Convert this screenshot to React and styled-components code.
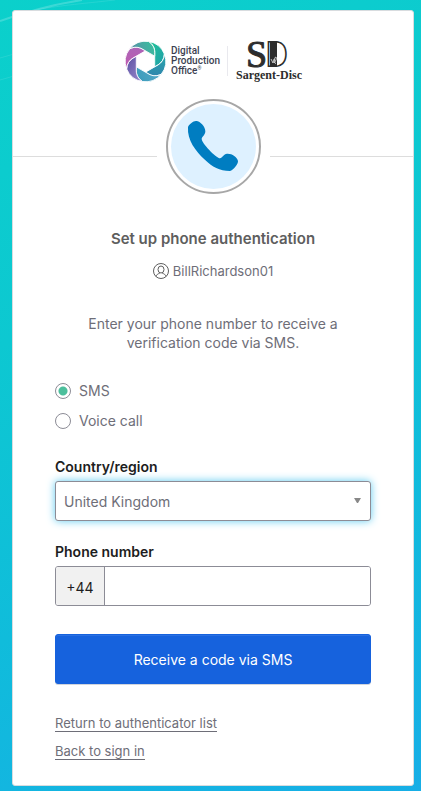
import React, { useState } from "react"
import styled, { createGlobalStyle } from "styled-components"

const GlobalStyle = createGlobalStyle`
  * {
    box-sizing: border-box;
  }

  body {
    margin: 0;
    font-family: Inter, "Liberation Sans", sans-serif;
    font-size: 14px;
    color: #6e6e78;
  }
`

const Page = styled.div`
  position: relative;
  min-height: 100vh;
  padding: 10px 7px 5px 12px;
  background: linear-gradient(155deg, #0bd0cb 0%, #0dc8d1 35%, #10bcdb 65%, #17aee6 100%);
`

const Streaks = styled.svg`
  position: absolute;
  top: 0;
  left: 0;
`

const Card = styled.main`
  position: relative;
  min-height: calc(100vh - 15px);
  background: #fff;
  border: 1px solid #d8dcdf;
  border-radius: 3px;
`

const Logos = styled.header`
  display: flex;
  justify-content: center;
  align-items: center;
  height: 80px;
  padding-top: 20px;
`

const ProductName = styled.div`
  margin: 0 7px 0 5px;
  font-family: Roboto, sans-serif;
  font-size: 10px;
  font-weight: 500;
  line-height: 10px;
  color: #3c3f51;

  sup {
    font-size: 5px;
    line-height: 0;
  }
`

const LogoDivider = styled.span`
  width: 1px;
  height: 30px;
  margin-right: 8px;
  background: #e9e9ee;
`

const Sargent = styled.svg`
  overflow: visible;
`

const BeaconRow = styled.div`
  display: flex;
  align-items: center;
  margin-top: 8px;
`

const Rule = styled.hr`
  flex: 1;
  height: 1px;
  margin: 20px 0 0;
  border: 0;
  background: #ddd;
`

const Beacon = styled.div`
  width: 95px;
  height: 95px;
  margin: 0 9px;
  padding: 3px;
  border: 2px solid #a7a7a7;
  border-radius: 50%;

  svg {
    display: block;
    border-radius: 50%;
    background: #def1ff;
  }
`

const Content = styled.form`
  display: flex;
  flex-direction: column;
  padding: 35px 42px 12px;
`

const Title = styled.h1`
  margin: 0;
  font-size: 15px;
  font-weight: 600;
  line-height: 20px;
  text-align: center;
  color: #5e5e5e;
`

const Identifier = styled.div`
  display: flex;
  justify-content: center;
  align-items: center;
  gap: 4px;
  margin-top: 12px;
  font-size: 13px;
  line-height: 20px;
`

const Explanation = styled.p`
  margin: 33px 0 0;
  padding: 0 30px;
  line-height: 19px;
  text-align: center;
`

const Options = styled.div`
  display: grid;
  gap: 10px;
  margin-top: 29px;
`

const Option = styled.label`
  display: flex;
  align-items: center;
  gap: 8px;
  line-height: 20px;
`

const Radio = styled.input`
  appearance: none;
  width: 16px;
  height: 16px;
  margin: 0;
  border: 1px solid #8c8c96;
  border-radius: 50%;

  &:checked {
    background: radial-gradient(circle, #4cbf9c 4px, #fff 5px);
  }
`

const Label = styled.label`
  margin-top: ${props => props.$top};
  margin-bottom: 4px;
  font-weight: 600;
  line-height: 20px;
  color: #1d1d21;
`

const SelectBox = styled.div`
  position: relative;

  svg {
    position: absolute;
    top: 17px;
    right: 10px;
    pointer-events: none;
  }
`

const Select = styled.select`
  appearance: none;
  display: block;
  width: 100%;
  height: 40px;
  padding: 0 28px 0 8px;
  border: 1px solid #8c8c96;
  border-radius: 3px;
  outline: none;
  background: #fff;
  box-shadow: 0 0 8px #5ecbf0;
  font: inherit;
  color: inherit;
`

const PhoneBox = styled.div`
  display: flex;
  height: 40px;
  overflow: hidden;
  border: 1px solid #8c8c96;
  border-radius: 3px;
`

const DialCode = styled.span`
  display: flex;
  align-items: center;
  justify-content: center;
  width: 49px;
  padding-top: 2px;
  border-right: 1px solid #8c8c96;
  background: #f1f1f1;
  color: #1d1d21;
`

const PhoneInput = styled.input`
  flex: 1;
  min-width: 0;
  padding: 0 10px;
  border: 0;
  outline: none;
  font: inherit;
  color: #1d1d21;
`

const SubmitButton = styled.button`
  height: 50px;
  margin: 28px 0 32px;
  padding: 0;
  border: 1px solid #1662dd;
  border-radius: 3px;
  background: #1662dd;
  box-shadow: 0 1px 0 #d0d4dc, inset 0 1px 0 #2a70e2;
  font: inherit;
  color: #fff;
`

const FooterLink = styled.a`
  align-self: flex-start;
  margin-bottom: 12px;
  border-bottom: 1px solid #6e6e78;
  font-size: 13px;
  line-height: 15px;
  text-decoration: none;
  color: inherit;
`

const blades = [
  ["#1fc596", "#209daa"],
  ["#27a8ab", "#327fae"],
  ["#59a9c8", "#369ab9"],
  ["#9b8acd", "#5b51a3"],
  ["#c15bb1", "#a667b8"],
  ["#5e8da8", "#31c79c"],
]

const ApertureLogo = () => (
  <svg width="41" height="41" viewBox="-20 -20 40 40" aria-hidden="true">
    <defs>
      {blades.map(([from, to], i) => (
        <linearGradient key={i} id={`blade${i}`} x1="0" y1="0" x2="1" y2="1">
          <stop offset="0" stopColor={from} />
          <stop offset="1" stopColor={to} />
        </linearGradient>
      ))}
    </defs>
    {blades.map((_, i) => (
      <path
        key={i}
        d="M3-19.5C7-17 9-13 9-9V5.2L12.3 3.3C15.8 1.3 18.2-2.4 18.4-7.2A19.8 19.8 0 0 0 3-19.5Z"
        fill={`url(#blade${i})`}
        stroke="#fff"
        strokeWidth="0.8"
        transform={`rotate(${i * 60})`}
      />
    ))}
  </svg>
)

const SargentLogo = () => (
  <Sargent width="65" height="44" viewBox="0 0 65 44" role="img" aria-label="Sargent-Disc">
    <g fill="#2d2d2d" fontFamily="Liberation Serif, serif">
      <text x="10" y="28" fontSize="38" stroke="#2d2d2d" strokeWidth="1">S</text>
      <text x="28" y="28" fontSize="35" fontFamily="Inter, sans-serif" fontWeight="200">D</text>
      <rect x="34" y="3" width="7" height="25" />
      <text x="0" y="40" fontSize="12" fontWeight="700">Sargent-Disc</text>
    </g>
    <path
      d="M35 20l2 4 1-4M38 24c2-2 3-5 2-6-2 0-2 6 0 7"
      fill="none"
      stroke="#fff"
      strokeWidth="0.7"
    />
  </Sargent>
)

const PhoneIcon = () => (
  <svg width="85" height="85" viewBox="60 42 255 255" aria-hidden="true">
    <path
      fill="#007dc1"
      d="M136 93C130 91 112 103 111 112C108 150 135 185 160 208C185 232 205 243 237 243C247 240 262 222 261 213C258 200 243 190 228 191C218 192 214 203 207 205C195 203 152 160 152 146C154 139 163 135 163 124C163 110 148 94 136 93Z"
    />
  </svg>
)

const UserIcon = () => (
  <svg width="16" height="16" viewBox="0 0 16 16" fill="none" stroke="#5e5e5e" aria-hidden="true">
    <circle cx="8" cy="8" r="7.500" />
    <ellipse cx="8" cy="6.500" rx="3" ry="3.500" />
    <path d="M3 13.500C3.500 11.500 5 10.800 6.500 10.300V9.500M13 13.500C12.500 11.500 11 10.800 9.500 10.300V9.500" />
  </svg>
)

const App = () => {
  const [method, setMethod] = useState("sms")

  return (
    <Page>
      <GlobalStyle />
      <Streaks width="120" height="100" fill="none" stroke="#fff" strokeOpacity="0.2" aria-hidden="true">
        <path d="M0 21C25 12 50 5 82 0" strokeWidth="2" />
        <path d="M30 11C60 5 90 3 115 0M0 58L14 54M0 80L14 76" strokeOpacity="0.1" />
      </Streaks>
      <Card>
        <Logos>
          <ApertureLogo />
          <ProductName>
            Digital
            <br />
            Production
            <br />
            Office<sup>®</sup>
          </ProductName>
          <LogoDivider />
          <SargentLogo />
        </Logos>
        <BeaconRow>
          <Rule />
          <Beacon>
            <PhoneIcon />
          </Beacon>
          <Rule />
        </BeaconRow>
        <Content onSubmit={e => e.preventDefault()}>
          <Title>Set up phone authentication</Title>
          <Identifier>
            <UserIcon />
            <span>BillRichardson01</span>
          </Identifier>
          <Explanation>
            Enter your phone number to receive a verification code via SMS.
          </Explanation>
          <Options role="radiogroup" aria-label="Method">
            <Option>
              <Radio
                type="radio"
                name="method"
                checked={method === "sms"}
                onChange={() => setMethod("sms")}
              />
              SMS
            </Option>
            <Option>
              <Radio
                type="radio"
                name="method"
                checked={method === "voice"}
                onChange={() => setMethod("voice")}
              />
              Voice call
            </Option>
          </Options>
          <Label htmlFor="country" $top="26px">Country/region</Label>
          <SelectBox>
            <Select id="country" defaultValue="GB">
              <option value="GB">United Kingdom</option>
            </Select>
            <svg width="7" height="5" fill="#888" aria-hidden="true">
              <path d="M0 0H7L4 5H3Z" />
            </svg>
          </SelectBox>
          <Label htmlFor="phone" $top="21px">Phone number</Label>
          <PhoneBox>
            <DialCode>+44</DialCode>
            <PhoneInput id="phone" type="tel" />
          </PhoneBox>
          <SubmitButton type="submit">Receive a code via SMS</SubmitButton>
          <FooterLink href="#">Return to authenticator list</FooterLink>
          <FooterLink href="#">Back to sign in</FooterLink>
        </Content>
      </Card>
    </Page>
  )
}

export default App
